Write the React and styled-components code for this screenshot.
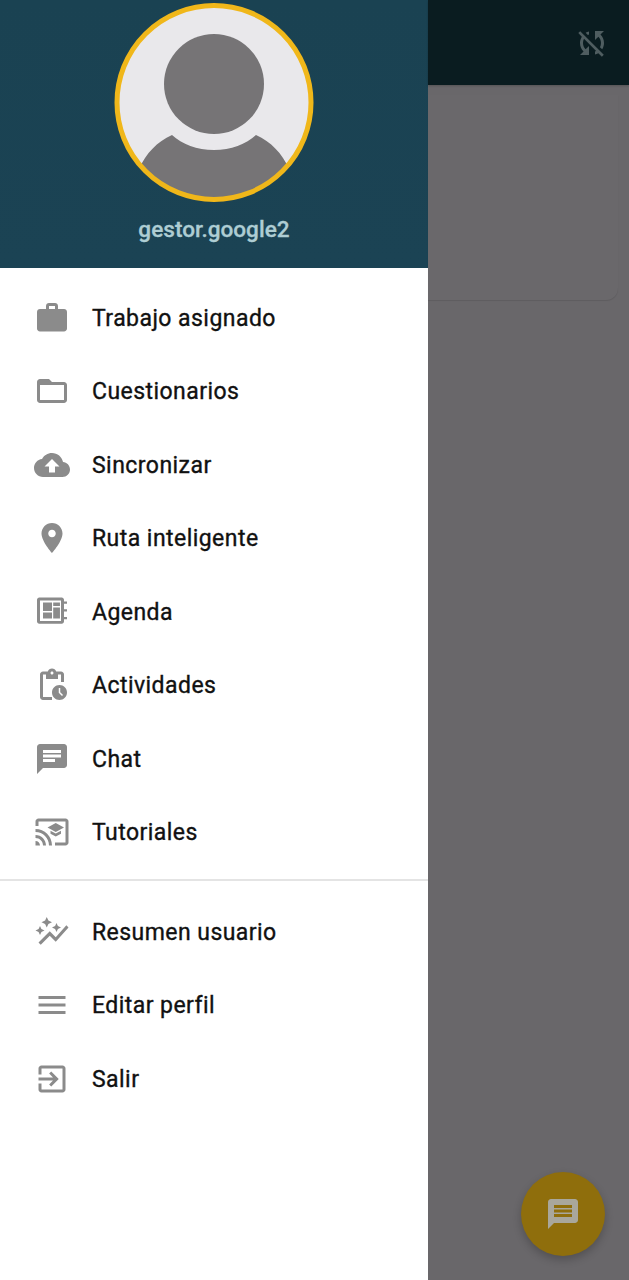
import React from "react";
import styled, { createGlobalStyle } from "styled-components";

const GlobalStyle = createGlobalStyle`
  html, body {
    margin: 0;
    padding: 0;
    background: #69676a;
  }
  body {
    font-family: Roboto, "Noto Sans", sans-serif;
  }
`;

const Screen = styled.div`
  position: relative;
  display: flex;
  width: 629px;
  height: 1280px;
  overflow: hidden;
`;

const Drawer = styled.aside`
  display: flex;
  flex-direction: column;
  flex: 0 0 428px;
  background: #fff;
`;

const Header = styled.header`
  display: flex;
  flex-direction: column;
  align-items: center;
  height: 268px;
  padding-top: 3px;
  box-sizing: border-box;
  background: linear-gradient(180deg, #1a4252 0%, #1b4354 100%);
`;

const UserName = styled.div`
  margin-top: 12px;
  font-size: 22.6px;
  line-height: 30px;
  font-weight: 500;
  color: #aecdd3;
  -webkit-text-stroke: 0.3px #aecdd3;
`;

const MenuList = styled.nav`
  display: flex;
  flex-direction: column;
  padding-top: ${(p) => p.$top}px;
`;

const MenuRow = styled.div`
  display: flex;
  align-items: center;
  height: 73.5px;
  padding-left: 34px;
`;

const MenuIcon = styled.svg`
  flex: none;
  width: 36px;
  height: 36px;
  fill: #8b8b8b;
`;

const MenuLabel = styled.span`
  margin: 1px 0 0 22px;
  font-size: 23px;
  font-weight: 400;
  letter-spacing: 0.45px;
  color: #111;
  -webkit-text-stroke: 0.35px #111;
`;

const Divider = styled.hr`
  height: 2px;
  margin: 10px 0 0;
  border: 0;
  background: #e4e4e4;
`;

const Main = styled.main`
  flex: 1;
  display: flex;
  flex-direction: column;
`;

const TopBar = styled.div`
  display: flex;
  align-items: center;
  justify-content: flex-end;
  height: 85px;
  padding-right: 19px;
  background: #0a1c20;
  box-shadow: 0 1px 2px rgba(0, 0, 0, 0.2);
`;

const SyncIcon = styled.svg`
  width: 36px;
  height: 36px;
  fill: #4f5d60;
`;

const Card = styled.section`
  height: 205px;
  margin: 10px 11px 0 0;
  background: #6a686b;
  border-radius: 0 0 12px 0;
  box-shadow: 0 1px 1px rgba(0, 0, 0, 0.1);
`;

const Fab = styled.button`
  position: absolute;
  right: 24px;
  bottom: 24px;
  display: flex;
  align-items: center;
  justify-content: center;
  width: 84px;
  height: 84px;
  padding: 0;
  border: 0;
  border-radius: 50%;
  background: #8f6e0c;
  box-shadow: 0 4px 8px rgba(0, 0, 0, 0.22);
`;

const FabIcon = styled.svg`
  width: 36px;
  height: 36px;
  fill: #a9a79c;
`;

const ICONS = {
  work: "M20 6h-4V4c0-1.11-.89-2-2-2h-4c-1.11 0-2 .89-2 2v2H4c-1.11 0-1.99.89-1.99 2L2 19c0 1.11.89 2 2 2h16c1.11 0 2-.89 2-2V8c0-1.11-.89-2-2-2zm-6 0h-4V4h4v2z",
  folder: "M20 6h-8l-2-2H4c-1.1 0-1.99.9-1.99 2L2 18c0 1.1.9 2 2 2h16c1.1 0 2-.9 2-2V8c0-1.1-.9-2-2-2zm0 12H4V8h16v10z",
  cloud: "M19.35 10.04C18.67 6.59 15.64 4 12 4 9.11 4 6.6 5.64 5.35 8.04 2.34 8.36 0 10.91 0 14c0 3.31 2.69 6 6 6h13c2.76 0 5-2.24 5-5 0-2.64-2.05-4.78-4.65-4.96zM14 13v4h-4v-4H7l5-5 5 5h-3z",
  place: "M12 2C8.13 2 5 5.13 5 9c0 5.25 7 13 7 13s7-7.75 7-13c0-3.87-3.13-7-7-7zm0 9.5c-1.38 0-2.5-1.12-2.5-2.5s1.12-2.5 2.5-2.5 2.5 1.12 2.5 2.5-1.12 2.5-2.5 2.5z",
  agenda: "M3.500 2.300h15c.8 0 1.500.700 1.500 1.500v1.200h2v1.500h-2v3.700h2v1.500h-2v3.700h2v1.500h-2v1.500c0 .8-.700 1.500-1.500 1.500h-15c-.8 0-1.500-.700-1.500-1.500V3.800c0-.8.700-1.500 1.500-1.500zm.500 2v13.700h14V4.300H4zm2 1.400h6v5.600H6V5.700zm6.800 0h4.500V8h-4.500V5.700zm0 3.300h4.500v7.300h-4.500V9zM6 12.300h6v4H6v-4z",
  pending: "M17 12c-2.76 0-5 2.24-5 5s2.24 5 5 5 5-2.24 5-5-2.24-5-5-5zm1.65 7.35L16.5 17.2V14h1v2.79l1.85 1.85-.7.71zM18 3h-3.18C14.4 1.84 13.3 1 12 1s-2.4.84-2.82 2H6c-1.1 0-2 .9-2 2v15c0 1.1.9 2 2 2h6v-2H6V5h2v3h8V5h2v5h2V5c0-1.1-.9-2-2-2zm-6 2c-.55 0-1-.45-1-1s.45-1 1-1 1 .45 1 1-.45 1-1 1z",
  chat: "M20 2H4c-1.1 0-1.99.9-1.99 2L2 22l4-4h14c1.1 0 2-.9 2-2V4c0-1.1-.9-2-2-2zM6 9h12v2H6V9zm8 5H6v-2h8v2zm4-6H6V6h12v2z",
  cast: "M21 3H3c-1.1 0-2 .9-2 2v3h2V5h18v14h-7v2h7c1.1 0 2-.9 2-2V5c0-1.1-.9-2-2-2zM1 18v3h3c0-1.66-1.34-3-3-3zm0-4v2c2.76 0 5 2.24 5 5h2c0-3.87-3.13-7-7-7zm0-4v2c4.97 0 9 4.03 9 9h2c0-6.08-4.93-11-11-11zm10 1.09v2L14.5 15l3.5-1.91v-2L14.5 13 11 11.09zM14.5 6L9 9l5.5 3L20 9l-5.5-3z",
  graph: "M14.06 9.94L12 9l2.06-.94L15 6l.94 2.06L18 9l-2.06.94L15 12l-.94-2.06zM4 14l.94-2.06L7 11l-2.06-.94L4 8l-.94 2.06L1 11l2.06.94L4 14zm4.5-5l1.09-2.41L12 5.5 9.59 4.41 8.5 2 7.41 4.41 5 5.5l2.41 1.09L8.5 9zm-4 11.5l6-6.01 4 4L23 8.93l-1.41-1.41-7.09 7.97-4-4L3 19l1.5 1.5z",
  menu: "M3 18h18v-2H3v2zm0-5h18v-2H3v2zm0-7v2h18V6H3z",
  exit: "M10.09 15.59L11.5 17l5-5-5-5-1.41 1.41L12.67 11H3v2h9.67l-2.58 2.59zM19 3H5c-1.11 0-2 .9-2 2v4h2V5h14v14H5v-4H3v4c0 1.1.89 2 2 2h14c1.1 0 2-.9 2-2V5c0-1.1-.9-2-2-2z",
  sync: "M10 6.35V4.26c-.8.21-1.55.54-2.23.96l1.46 1.46c.25-.12.5-.24.77-.33zm-7.14-.94l2.36 2.36C4.45 8.99 4 10.44 4 12c0 2.21.91 4.2 2.36 5.64L4 20h6v-6l-2.24 2.24C6.68 15.15 6 13.66 6 12c0-1 .25-1.94.68-2.77l8.08 8.08c-.25.13-.5.25-.77.34v2.09c.8-.21 1.55-.54 2.23-.96l2.36 2.36 1.27-1.27L4.14 4.14 2.86 5.41zM20 4h-6v6l2.24-2.24C17.32 8.85 18 10.34 18 12c0 1-.25 1.94-.68 2.77l1.46 1.46C19.55 15.01 20 13.56 20 12c0-2.21-.91-4.2-2.36-5.64L20 4z",
  message: "M20 2H4c-1.1 0-1.99.9-1.99 2L2 22l4-4h14c1.1 0 2-.9 2-2V4c0-1.1-.9-2-2-2zm-2 12H6v-2h12v2zm0-3H6V9h12v2zm0-3H6V6h12v2z",
};

const mainItems = [
  { name: "Trabajo asignado", icon: "work" },
  { name: "Cuestionarios", icon: "folder" },
  { name: "Sincronizar", icon: "cloud" },
  { name: "Ruta inteligente", icon: "place" },
  { name: "Agenda", icon: "agenda" },
  { name: "Actividades", icon: "pending" },
  { name: "Chat", icon: "chat" },
  { name: "Tutoriales", icon: "cast" },
];

const extraItems = [
  { name: "Resumen usuario", icon: "graph" },
  { name: "Editar perfil", icon: "menu" },
  { name: "Salir", icon: "exit" },
];

function Avatar() {
  return (
    <svg width="200" height="200" viewBox="0 0 200 200">
      <defs>
        <clipPath id="avatarClip">
          <circle cx="100" cy="99.5" r="97" />
        </clipPath>
      </defs>
      <circle cx="100" cy="99.5" r="97" fill="#e9e8eb" />
      <g clipPath="url(#avatarClip)" fill="#767476">
        <ellipse cx="100" cy="81" rx="50" ry="50" />
        <path d="M58 132c10 9 25 15 42 15s32-6 42-15c15 7 26 18 33 34v40H25v-40c7-16 18-27 33-34z" />
      </g>
      <circle cx="100" cy="99.5" r="97" fill="none" stroke="#f0b71a" strokeWidth="5" />
    </svg>
  );
}

function Item({ name, icon }) {
  return (
    <MenuRow>
      <MenuIcon viewBox="0 0 24 24">
        <path d={ICONS[icon]} />
      </MenuIcon>
      <MenuLabel>{name}</MenuLabel>
    </MenuRow>
  );
}

export default function App() {
  return (
    <Screen>
      <GlobalStyle />
      <Drawer>
        <Header>
          <Avatar />
          <UserName>gestor.google2</UserName>
        </Header>
        <MenuList $top={13}>
          {mainItems.map((item) => (
            <Item key={item.name} name={item.name} icon={item.icon} />
          ))}
        </MenuList>
        <Divider />
        <MenuList $top={14}>
          {extraItems.map((item) => (
            <Item key={item.name} name={item.name} icon={item.icon} />
          ))}
        </MenuList>
      </Drawer>
      <Main>
        <TopBar>
          <SyncIcon viewBox="0 0 24 24">
            <path d={ICONS.sync} />
          </SyncIcon>
        </TopBar>
        <Card />
      </Main>
      <Fab>
        <FabIcon viewBox="0 0 24 24">
          <path d={ICONS.message} />
        </FabIcon>
      </Fab>
    </Screen>
  );
}
